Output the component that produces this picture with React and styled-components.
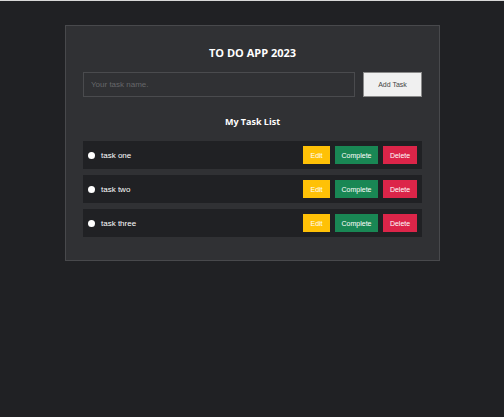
import styled, { createGlobalStyle } from "styled-components"

const GlobalStyle = createGlobalStyle`
    html, body {
        margin: 0;
        padding: 0;
        background-color: #202124;
    }
    body {
        border-top: 1px solid #d8d8d8;
        font-family: "Liberation Sans", Arial, sans-serif;
    }
`
const Page = styled.div`
    min-height: 416px;
    display: flex;
    justify-content: center;
    align-items: flex-start;
    padding: 24px 0 0 1px;
    box-sizing: border-box;
`
const Panel = styled.div`
    width: 375px;
    box-sizing: border-box;
    background-color: #303134;
    border: solid #48494c 1px;
    padding: 17px 17px 23px 17px;
    display: flex;
    flex-direction: column;
`
const Title = styled.h1`
    margin: 1px 0 0 0;
    color: white;
    font-family: "Open Sans", sans-serif;
    font-weight: 700;
    font-size: 11px;
    line-height: 17px;
    text-align: center;
`
const Form = styled.div`
    display: flex;
    gap: 8px;
    margin-top: 11px;
`
const Input = styled.input`
    flex: 1;
    height: 25px;
    box-sizing: border-box;
    background-color: #303134;
    border: solid #4a4b4e 1px;
    color: white;
    font-family: "Liberation Sans", Arial, sans-serif;
    font-size: 8px;
    padding: 0 7px;
    outline: none;
    &::placeholder {
        color: #66676a;
    }
`
const AddButton = styled.button`
    width: 59px;
    height: 25px;
    background-color: #f0f0f0;
    border: solid #8a8a8a 1px;
    color: #444;
    font-family: "Liberation Sans", Arial, sans-serif;
    font-size: 7px;
    cursor: pointer;
`
const SubTitle = styled.h2`
    margin: 18px 0 0 0;
    color: white;
    font-family: "Open Sans", sans-serif;
    font-weight: 700;
    font-size: 9px;
    line-height: 14px;
    text-align: center;
`
const List = styled.ul`
    list-style: none;
    margin: 12px 0 0 0;
    padding: 0;
    display: flex;
    flex-direction: column;
    gap: 6px;
`
const Row = styled.li`
    display: flex;
    align-items: center;
    height: 28px;
    background-color: #202124;
    padding: 0 5px;
    box-sizing: border-box;
`
const Dot = styled.span`
    width: 7px;
    height: 7px;
    border-radius: 50%;
    background-color: white;
`
const TaskName = styled.span`
    flex: 1;
    margin-left: 6px;
    color: white;
    font-family: "Liberation Sans", Arial, sans-serif;
    font-size: 8px;
`
const Actions = styled.div`
    display: flex;
    gap: 5px;
`
const ActionButton = styled.button`
    height: 18px;
    width: ${props => props.$width}px;
    padding: 0;
    border: none;
    background-color: ${props => props.$color};
    color: white;
    font-family: "Liberation Sans", Arial, sans-serif;
    font-size: 7px;
    cursor: pointer;
`

const tasks = ["task one", "task two", "task three"]

function App() {
    return (
        <>
            <GlobalStyle />
            <Page>
                <Panel>
                    <Title>TO DO APP 2023</Title>
                    <Form>
                        <Input placeholder="Your task name." />
                        <AddButton>Add Task</AddButton>
                    </Form>
                    <SubTitle>My Task List</SubTitle>
                    <List>
                        {tasks.map(task => (
                            <Row key={task}>
                                <Dot />
                                <TaskName>{task}</TaskName>
                                <Actions>
                                    <ActionButton $color="#ffc107" $width={27}>Edit</ActionButton>
                                    <ActionButton $color="#198754" $width={43}>Complete</ActionButton>
                                    <ActionButton $color="#dc2549" $width={34}>Delete</ActionButton>
                                </Actions>
                            </Row>
                        ))}
                    </List>
                </Panel>
            </Page>
        </>
    )
}

export default App
